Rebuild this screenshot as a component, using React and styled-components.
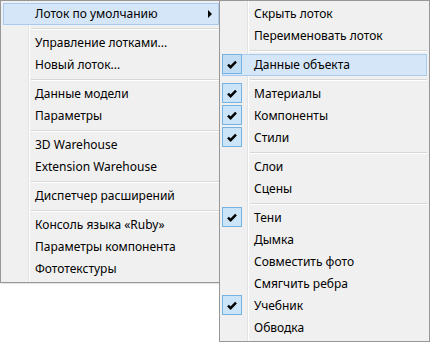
import styled, { createGlobalStyle } from 'styled-components';

const GlobalStyle = createGlobalStyle`
  html, body {
    margin: 0;
    padding: 0;
    background: #ffffff;
  }
  body {
    font-family: 'Noto Sans', 'DejaVu Sans', sans-serif;
    font-size: 12px;
    color: #000;
  }
`;

const Stage = styled.div`
  position: relative;
  width: 430px;
  height: 342px;
`;

const Menu = styled.ul`
  list-style: none;
  margin: 0;
  padding: 2px;
  width: ${({ $width }) => $width}px;
  box-sizing: border-box;
  background: #f0f0f0;
  border: 1px solid #979797;
  box-shadow: 1px 1px 1px rgba(0, 0, 0, 0.1);
  background-image: linear-gradient(
    to right,
    transparent ${({ $gutter }) => $gutter}px,
    #e2e3e3 ${({ $gutter }) => $gutter}px,
    #e2e3e3 ${({ $gutter }) => $gutter + 1}px,
    #ffffff ${({ $gutter }) => $gutter + 1}px,
    #ffffff ${({ $gutter }) => $gutter + 2}px,
    transparent ${({ $gutter }) => $gutter + 2}px
  );
`;

const SubMenu = styled(Menu)`
  position: absolute;
  left: 219px;
  top: 0;
  z-index: 2;
`;

const Item = styled.li`
  position: relative;
  display: flex;
  align-items: center;
  height: 22px;
  box-sizing: border-box;
  padding-left: ${({ $indent }) => $indent}px;
  border: 1px solid ${({ $hot }) => ($hot ? '#a8cbee' : 'transparent')};
  background: ${({ $hot }) => ($hot ? '#d5e6f8' : 'transparent')};
  white-space: nowrap;
`;

const Label = styled.span`
  flex: 1;
  line-height: 20px;
`;

const Arrow = styled.span`
  width: 0;
  height: 0;
  margin-right: 6px;
  border-top: 4px solid transparent;
  border-bottom: 4px solid transparent;
  border-left: 4px solid #000;
`;

const CheckBox = styled.span`
  position: absolute;
  left: 0;
  top: -1px;
  width: 20px;
  height: 20px;
  box-sizing: border-box;
  display: flex;
  align-items: center;
  justify-content: center;
  border: 1px solid #74b2e1;
  background: ${({ $hot }) => ($hot ? '#c2dcf3' : '#cbe4f7')};
  margin-left: -1px;
`;

const Separator = styled.li`
  height: 7px;
  display: flex;
  align-items: center;
  padding-left: ${({ $indent }) => $indent}px;

  &::after {
    content: '';
    flex: 1;
    height: 1px;
    background: #d7d7d7;
    box-shadow: 0 1px 0 #ffffff;
  }
`;

const Check = () => (
  <svg width="10" height="9" viewBox="0 0 10 9">
    <path d="M1 4.6 L3.6 7.2 L9 1.6" fill="none" stroke="#000" strokeWidth="2.4" />
  </svg>
);

const mainItems = [
  { label: 'Лоток по умолчанию', hot: true, arrow: true },
  '-',
  { label: 'Управление лотками...' },
  { label: 'Новый лоток...' },
  '-',
  { label: 'Данные модели' },
  { label: 'Параметры' },
  '-',
  { label: '3D Warehouse' },
  { label: 'Extension Warehouse' },
  '-',
  { label: 'Диспетчер расширений' },
  '-',
  { label: 'Консоль языка «Ruby»' },
  { label: 'Параметры компонента' },
  { label: 'Фототекстуры' },
];

const subItems = [
  { label: 'Скрыть лоток' },
  { label: 'Переименовать лоток' },
  '-',
  { label: 'Данные объекта', hot: true, checked: true },
  '-',
  { label: 'Материалы', checked: true },
  { label: 'Компоненты', checked: true },
  { label: 'Стили', checked: true },
  '-',
  { label: 'Слои' },
  { label: 'Сцены' },
  '-',
  { label: 'Тени', checked: true },
  { label: 'Дымка' },
  { label: 'Совместить фото' },
  { label: 'Смягчить ребра' },
  { label: 'Учебник', checked: true },
  { label: 'Обводка' },
];

const MenuList = ({ items, indent, sepIndent }) =>
  items.map((item, i) =>
    item === '-' ? (
      <Separator key={i} $indent={sepIndent} />
    ) : (
      <Item key={i} $hot={item.hot} $indent={indent}>
        {item.checked && (
          <CheckBox $hot={item.hot}>
            <Check />
          </CheckBox>
        )}
        <Label>{item.label}</Label>
        {item.arrow && <Arrow />}
      </Item>
    )
  );

const App = () => (
  <>
    <GlobalStyle />
    <Stage>
      <Menu $width={222} $gutter={27}>
        <MenuList items={mainItems} indent={31} sepIndent={28} />
      </Menu>
      <SubMenu $width={211} $gutter={27}>
        <MenuList items={subItems} indent={31} sepIndent={28} />
      </SubMenu>
    </Stage>
  </>
);

export default App;
